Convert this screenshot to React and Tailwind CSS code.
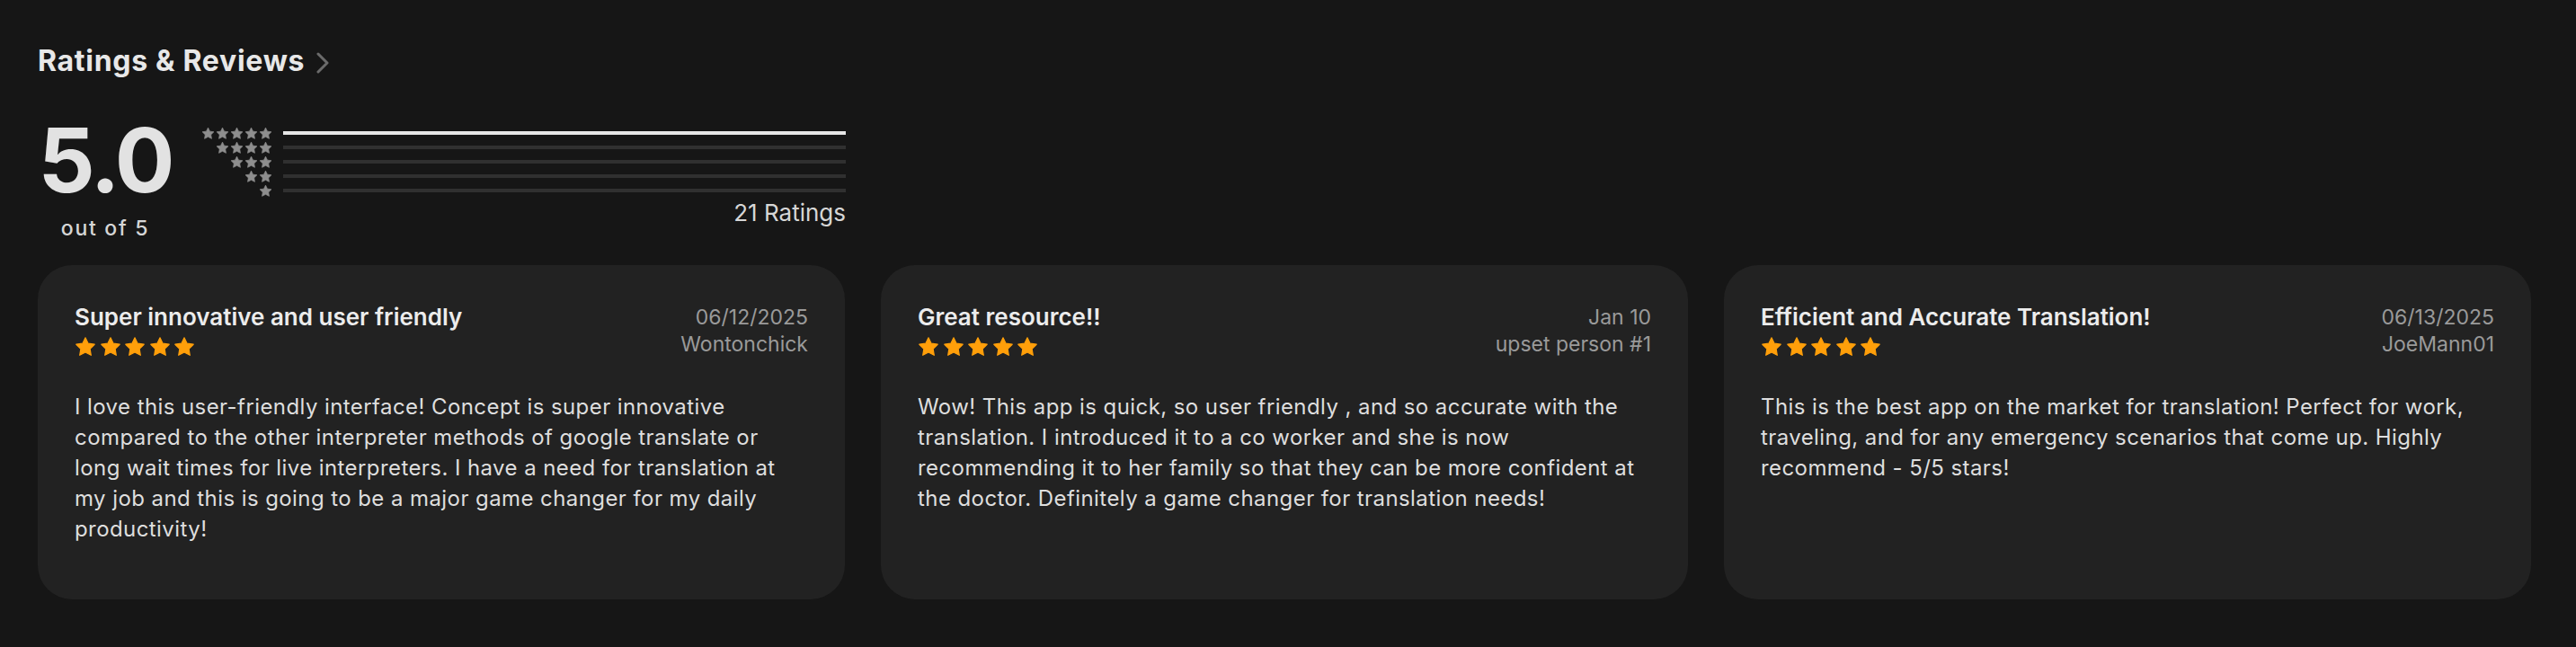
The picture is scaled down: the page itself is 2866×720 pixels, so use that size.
import React from 'react';

const reviews = [
  {
    title: 'Super innovative and user friendly',
    date: '06/12/2025',
    author: 'Wontonchick',
    body: 'I love this user-friendly interface! Concept is super innovative compared to the other interpreter methods of google translate or long wait times for live interpreters. I have a need for translation at my job and this is going to be a major game changer for my daily productivity!',
  },
  {
    title: 'Great resource!!',
    date: 'Jan 10',
    author: 'upset person #1',
    body: 'Wow! This app is quick, so user friendly , and so accurate with the translation. I introduced it to a co worker and she is now recommending it to her family so that they can be more confident at the doctor. Definitely a game changer for translation needs!',
  },
  {
    title: 'Efficient and Accurate Translation!',
    date: '06/13/2025',
    author: 'JoeMann01',
    body: 'This is the best app on the market for translation! Perfect for work, traveling, and for any emergency scenarios that come up. Highly recommend - 5/5 stars!',
  },
];

// share of ratings per star count, 5 down to 1
const distribution = [1, 0, 0, 0, 0];

const Star = ({ className = '' }) => (
  <svg viewBox="0 0 24 24" className={className} fill="currentColor" stroke="currentColor" strokeWidth="1.2" strokeLinejoin="round">
    <polygon points="12,1.8 15.1,8.2 22.2,9.2 17.1,14.2 18.3,21.3 12,18 5.7,21.3 6.9,14.2 1.8,9.2 8.9,8.2" />
  </svg>
);

const Histogram = () => (
  <div className="w-[717px] mt-[11px] flex flex-col">
    {distribution.map((share, i) => (
      <div key={i} className="h-[16px] flex items-center">
        <div className="w-[79px] flex justify-end gap-[1px] text-[#8e8e8e]">
          {Array.from({ length: 5 - i }).map((_, j) => (
            <Star key={j} className="w-[15px] h-[15px]" />
          ))}
        </div>
        <div className="ml-[12px] flex-1 h-[4px] bg-[#303030]">
          <div className="h-full bg-[#e6e6e6]" style={{ width: `${share * 100}%` }} />
        </div>
      </div>
    ))}
    <div className="mt-[4px] text-right text-[26px] leading-none text-[#d6d6d6]">21 Ratings</div>
  </div>
);

const ReviewCard = ({ review }) => (
  <div className="w-[898px] h-[372px] shrink-0 rounded-[38px] bg-[#222222] px-[41px] pt-[43px]">
    <div className="flex justify-between">
      <div className="flex flex-col">
        <div className="text-[26px] leading-[30px] font-semibold text-[#ececec]">{review.title}</div>
        <div className="h-[36px] flex items-center gap-[3.5px] text-[#ff9f0a]">
          {Array.from({ length: 5 }).map((_, j) => (
            <Star key={j} className="w-[24px] h-[24px]" />
          ))}
        </div>
      </div>
      <div className="flex flex-col items-end text-[23px] leading-[30px] text-[#9a9a9a]">
        <div>{review.date}</div>
        <div>{review.author}</div>
      </div>
    </div>
    <p className="mt-[32px] text-[24px] leading-[34px] text-[#dedede] tracking-[0.42px]">{review.body}</p>
  </div>
);

export default function App() {
  return (
    <div className="min-h-[720px] w-full bg-[#161616] pl-[42px] pt-[52px] font-['Inter',sans-serif] overflow-hidden">
      <div className="flex items-start gap-[13px]">
        <h2 className="text-[32px] leading-none font-bold text-[#e8e8e8] tracking-[0.7px]">Ratings &amp; Reviews</h2>
        <svg viewBox="0 0 14 24" className="w-[14px] h-[24px] mt-[6px]" fill="none" stroke="#6b6b6b" strokeWidth="3" strokeLinecap="round" strokeLinejoin="round">
          <polyline points="2,2 12,12 2,22" />
        </svg>
      </div>

      <div className="mt-[45px] flex items-start">
        <div className="w-[150px] flex flex-col items-center">
          <div className="text-[99px] leading-none font-bold text-[#e2e2e2] tracking-[-3px]">5.0</div>
          <div className="mt-[15px] text-[23px] leading-none font-medium text-[#d6d6d6] tracking-[1.7px]">out of 5</div>
        </div>
        <div className="ml-[32px]">
          <Histogram />
        </div>
      </div>

      <div className="mt-[29px] flex gap-[40px]">
        {reviews.map((r) => (
          <ReviewCard key={r.title} review={r} />
        ))}
      </div>
    </div>
  );
}
